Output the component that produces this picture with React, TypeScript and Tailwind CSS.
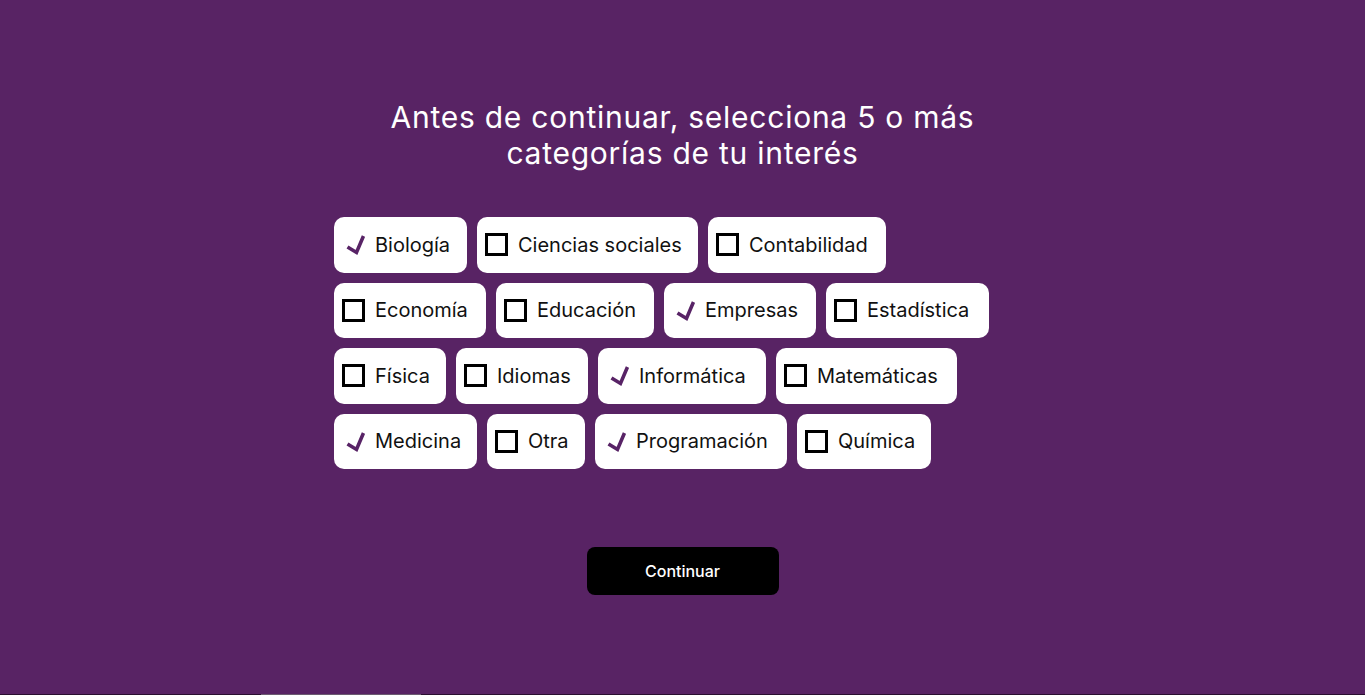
import React from "react";

type Item = { label: string; checked: boolean; w: string };

const rows: Item[][] = [
  [
    { label: "Biología", checked: true, w: "w-[133px]" },
    { label: "Ciencias sociales", checked: false, w: "w-[221px]" },
    { label: "Contabilidad", checked: false, w: "w-[178px]" },
  ],
  [
    { label: "Economía", checked: false, w: "w-[152px]" },
    { label: "Educación", checked: false, w: "w-[158px]" },
    { label: "Empresas", checked: true, w: "w-[152px]" },
    { label: "Estadística", checked: false, w: "w-[163px]" },
  ],
  [
    { label: "Física", checked: false, w: "w-[112px]" },
    { label: "Idiomas", checked: false, w: "w-[132px]" },
    { label: "Informática", checked: true, w: "w-[168px]" },
    { label: "Matemáticas", checked: false, w: "w-[181px]" },
  ],
  [
    { label: "Medicina", checked: true, w: "w-[143px]" },
    { label: "Otra", checked: false, w: "w-[98px]" },
    { label: "Programación", checked: true, w: "w-[192px]" },
    { label: "Química", checked: false, w: "w-[134px]" },
  ],
];

function Check() {
  return (
    <svg width="23" height="23" viewBox="0 0 23 23" className="shrink-0">
      <path
        d="M5.5 14 L14.5 19.5 L21.5 3"
        fill="none"
        stroke="#582366"
        strokeWidth="3.6"
        strokeLinejoin="miter"
        strokeLinecap="butt"
      />
    </svg>
  );
}

function Box() {
  return <span className="block w-[23px] h-[23px] border-[3px] border-black shrink-0" />;
}

export default function App() {
  return (
    <div
      className="w-full h-[695px] bg-[#582364] flex flex-col overflow-hidden"
      style={{ fontFamily: "Inter, 'Noto Sans', sans-serif" }}
    >
      <div className="flex-1 flex flex-col items-center pt-[99px]">
        <h1 className="text-white text-[30px] leading-[36px] text-center font-normal w-[700px] tracking-[0.75px]">
          Antes de continuar, selecciona 5 o más
          <br />
          categorías de tu interés
        </h1>
        <div className="w-[697px] mt-[46px] flex flex-col gap-y-[10px]">
          {rows.map((row, i) => (
            <div key={i} className="flex gap-x-[10px]">
              {row.map((it) => (
                <div
                  key={it.label}
                  className={`${it.w} h-[55.5px] bg-white rounded-[10px] flex items-center pl-[8px] gap-[10px] text-[20px] text-[#111] whitespace-nowrap`}
                >
                  {it.checked ? <Check /> : <Box />}
                  <span>{it.label}</span>
                </div>
              ))}
            </div>
          ))}
        </div>
        <button className="mt-[78px] w-[192px] h-[48px] bg-black rounded-[8px] text-white text-[16px] font-medium">
          Continuar
        </button>
      </div>
      <div className="h-[1px] w-full bg-[#2a0f30] flex">
        <div className="ml-[261px] w-[160px] h-[1px] bg-[#6b5a70]" />
      </div>
    </div>
  );
}
